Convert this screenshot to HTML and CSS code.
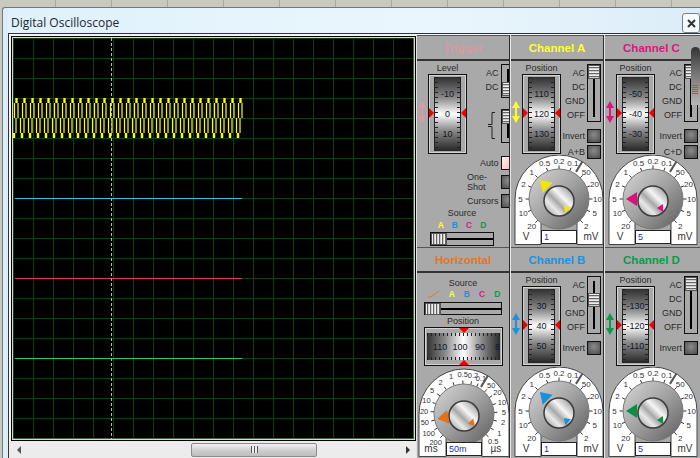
FILE: index.html
```html
<!DOCTYPE html>
<html lang="en">
<head>
  <meta charset="UTF-8" />
  <title>Digital Oscilloscope</title>
  <link rel="stylesheet" href="styles.css">
</head>
<body>
  <div class="window">
    <div class="titlebar">
      <span class="title">Digital Oscilloscope</span>
      <button class="close"><svg width="9" height="9" viewBox="0 0 9 9"><path d="M1 1l7 7M8 1L1 8" stroke="#333" stroke-width="2"/></svg></button>
    </div>

    <div class="client">
      <!-- Scope screen and its scrollbar -->
      <div class="scope-col">
        <div class="scope">
          <div class="screen"><svg id="traces" width="401" height="401" viewBox="0 0 401 401"></svg></div>
        </div>
        <div class="scrollbar">
          <span class="arrow-left"></span>
          <div class="track"><div class="thumb"><span class="grip"></span></div></div>
          <span class="arrow-right"></span>
        </div>
      </div>

      <!-- Control panels -->
      <div class="panels">
        <div class="panel">
          <h2 class="heading trigger">Trigger</h2>
          <div class="body">
            <div class="trigger-top">
              <svg class="updown" style="color:#dd9aa4" width="8" height="22" viewBox="0 0 8 22"><path d="M4 0l4 7H5v8h3l-4 7-4-7h3V7H0z" fill="currentColor"/></svg>
              <div class="drum-col">
                <div class="cap">Level</div>
                <div class="drum"><div class="face"><span>-10</span><span>0</span><span>10</span></div></div>
              </div>
              <div class="trigger-side">
                <div class="coupling">
                  <div class="labels two"><span>AC</span><span>DC</span></div>
                  <div class="vslider short"><i class="vthumb low"></i></div>
                </div>
                <div class="coupling edge-row">
                  <svg width="9" height="27" viewBox="0 0 9 27"><path d="M8 .5H5v12H1M1 14.5h4v12h3" fill="none" stroke="#222"/></svg>
                  <div class="vslider short"><i class="vthumb"></i></div>
                </div>
                <div class="btn-row first"><span>Auto</span><i class="btn on"></i></div>
                <div class="btn-row"><span>One-Shot</span><i class="btn"></i></div>
                <div class="btn-row"><span>Cursors</span><i class="btn"></i></div>
              </div>
            </div>
            <div class="source trigger-source">
              <div class="cap">Source</div>
              <div class="letters"><b class="c-a">A</b><b class="c-b">B</b><b class="c-c">C</b><b class="c-d">D</b></div>
              <div class="hslider narrow"><i class="hthumb"></i></div>
            </div>
          </div>
        </div>

        <div class="panel">
          <h2 class="heading c-a">Channel A</h2>
          <div class="body">
            <div class="chan-top">
              <svg class="updown" style="color:#ffff22" width="8" height="22" viewBox="0 0 8 22"><path d="M4 0l4 7H5v8h3l-4 7-4-7h3V7H0z" fill="currentColor"/></svg>
              <div class="drum-col">
                <div class="cap">Position</div>
                <div class="drum"><div class="face"><span>110</span><span>120</span><span>130</span></div></div>
              </div>
              <div class="chan-side">
                <div class="coupling">
                  <div class="labels"><span>AC</span><span>DC</span><span>GND</span><span>OFF</span></div>
                  <div class="vslider"><i class="vthumb"></i></div>
                </div>
                <div class="btn-row first"><span>Invert</span><i class="btn"></i></div>
                <div class="btn-row"><span>A+B</span><i class="btn"></i></div>
              </div>
            </div>
            <svg class="dial" data-color="#f5e600" data-angle="-45" data-value="1" data-kind="volts" width="94" height="90"></svg>
          </div>
        </div>

        <div class="panel last">
          <h2 class="heading c-c">Channel C</h2>
          <div class="body">
            <div class="chan-top">
              <svg class="updown" style="color:#e0147f" width="8" height="22" viewBox="0 0 8 22"><path d="M4 0l4 7H5v8h3l-4 7-4-7h3V7H0z" fill="currentColor"/></svg>
              <div class="drum-col">
                <div class="cap">Position</div>
                <div class="drum"><div class="face"><span>-50</span><span>-40</span><span>-30</span></div></div>
              </div>
              <div class="chan-side">
                <div class="coupling">
                  <div class="labels"><span>AC</span><span>DC</span><span>GND</span><span>OFF</span></div>
                  <div class="vslider"><i class="vthumb"></i></div>
                </div>
                <div class="btn-row first"><span>Invert</span><i class="btn"></i></div>
                <div class="btn-row"><span>C+D</span><i class="btn"></i></div>
              </div>
            </div>
            <svg class="dial" data-color="#d8117c" data-angle="-90" data-value="5" data-kind="volts" width="94" height="90"></svg>
            <div class="overlay-bar"></div>
          </div>
        </div>

        <div class="panel">
          <h2 class="heading horizontal">Horizontal</h2>
          <div class="body">
            <div class="source horiz-source">
              <div class="cap">Source</div>
              <div class="letters wide">
                <svg width="12" height="8" viewBox="0 0 12 8"><path d="M0 7h3l8-6" fill="none" stroke="#e07a25"/></svg>
                <b class="c-a">A</b><b class="c-b">B</b><b class="c-c">C</b><b class="c-d">D</b>
              </div>
              <div class="hslider"><i class="hthumb"></i></div>
            </div>
            <div class="cap">Position</div>
            <div class="hdrum"><div class="hface"><span>110</span><span>100</span><span>90</span><span>80</span></div></div>
            <svg class="dial" data-color="#e0721c" data-angle="-100" data-value="50m" data-kind="time" width="94" height="90"></svg>
          </div>
        </div>

        <div class="panel">
          <h2 class="heading c-b">Channel B</h2>
          <div class="body">
            <div class="chan-top">
              <svg class="updown" style="color:#1a92e0" width="8" height="22" viewBox="0 0 8 22"><path d="M4 0l4 7H5v8h3l-4 7-4-7h3V7H0z" fill="currentColor"/></svg>
              <div class="drum-col">
                <div class="cap">Position</div>
                <div class="drum"><div class="face"><span>30</span><span>40</span><span>50</span></div></div>
              </div>
              <div class="chan-side">
                <div class="coupling">
                  <div class="labels"><span>AC</span><span>DC</span><span>GND</span><span>OFF</span></div>
                  <div class="vslider"><i class="vthumb second"></i></div>
                </div>
                <div class="btn-row first"><span>Invert</span><i class="btn"></i></div>
              </div>
            </div>
            <svg class="dial" data-color="#1a8fdc" data-angle="-45" data-value="1" data-kind="volts" width="94" height="90"></svg>
          </div>
        </div>

        <div class="panel last">
          <h2 class="heading c-d">Channel D</h2>
          <div class="body">
            <div class="chan-top">
              <svg class="updown" style="color:#0a9a48" width="8" height="22" viewBox="0 0 8 22"><path d="M4 0l4 7H5v8h3l-4 7-4-7h3V7H0z" fill="currentColor"/></svg>
              <div class="drum-col">
                <div class="cap">Position</div>
                <div class="drum"><div class="face"><span>-130</span><span>-120</span><span>-110</span></div></div>
              </div>
              <div class="chan-side">
                <div class="coupling">
                  <div class="labels"><span>AC</span><span>DC</span><span>GND</span><span>OFF</span></div>
                  <div class="vslider"><i class="vthumb"></i></div>
                </div>
                <div class="btn-row first"><span>Invert</span><i class="btn"></i></div>
              </div>
            </div>
            <svg class="dial" data-color="#0a8f44" data-angle="-90" data-value="5" data-kind="volts" width="94" height="90"></svg>
          </div>
        </div>
      </div>
    </div>
  </div>

  <script src="script.js"></script>
</body>
</html>
```

FILE: styles.css
```css
/* Basic reset */
* {
  margin: 0;
  padding: 0;
  box-sizing: border-box;
}

body {
  width: 700px;
  height: 458px;
  overflow: hidden;
  padding: 7px 0 0 2px;
  background: repeating-linear-gradient(90deg, #c9c9bf 0 55px, #a9a9a0 55px 56px);
  font-family: "Liberation Sans", sans-serif;
  font-size: 9px;
  color: #2a2a2a;
}

/* Window frame */
.window {
  width: 698px;
  height: 451px;
  padding-left: 5px;
  background: #dcedf8;
  border-left: 1px solid #6d7a84;
  border-top: 1px solid #6d7a84;
  border-radius: 3px 0 0 0;
}

.titlebar {
  height: 25px;
  display: flex;
  align-items: center;
  justify-content: space-between;
  padding: 3px 0 0 3px;
  background: linear-gradient(90deg, #dff1fc, #eaf6fd 60%, #dcedf8);
}

.title {
  font-family: "Open Sans", sans-serif;
  font-size: 12px;
  color: #1c2733;
}

.close {
  width: 18px;
  height: 20px;
  margin-top: 2px;
  border: 1px solid #77818a;
  border-radius: 3px;
  background: #f6fafc;
  display: flex;
  align-items: center;
  justify-content: center;
}

.client {
  height: 425px;
  display: flex;
  background: #f4f4f4;
  border-top: 1px solid #333;
  border-left: 1px solid #333;
}

/* Scope */
.scope-col {
  width: 408px;
  padding: 2px 0 0 2px;
  display: flex;
  flex-direction: column;
}

.scope {
  width: 405px;
  height: 405px;
  padding: 1px 0 0 1px;
  border: 1px solid #000;
  background: #d8d8d8;
}

.screen {
  width: 401px;
  height: 401px;
  background-color: #000;
  background-image:
    linear-gradient(#0c430c 1px, transparent 1px),
    linear-gradient(90deg, #0c430c 1px, transparent 1px);
  background-size: 20px 20px;
  border-right: 1px solid #3e6a3e;
  border-bottom: 1px solid #3e6a3e;
}

.screen svg {
  display: block;
}

.scrollbar {
  flex: 1;
  display: flex;
  align-items: center;
  margin-left: -2px;
  padding: 0 4px;
  background: #ececec;
}

.track {
  flex: 1;
  padding-left: 170px;
}

.thumb {
  width: 126px;
  height: 14px;
  border: 1px solid #8b8b8b;
  border-radius: 2px;
  background: linear-gradient(#f2f2f2, #d0d0d0 50%, #bdbdbd);
  display: flex;
  align-items: center;
  justify-content: center;
}

.grip {
  width: 7px;
  height: 7px;
  background: repeating-linear-gradient(90deg, #555 0 1px, #eee 1px 3px);
}

.arrow-left, .arrow-right {
  width: 0;
  height: 0;
  border-top: 4px solid transparent;
  border-bottom: 4px solid transparent;
}
.arrow-left { border-right: 4px solid #555; margin-left: 4px; }
.arrow-right { border-left: 4px solid #333; margin-right: 2px; }

/* Panels grid */
.panels {
  display: grid;
  grid-template-columns: 94px 94px 96px;
  grid-template-rows: 212px 212px;
  margin-top: 1px;
}

.panel {
  display: flex;
  flex-direction: column;
  background: #a9a9a9;
  border-left: 1px solid #e4e4e4;
  border-right: 1px solid #2e2e2e;
  overflow: hidden;
}
.panel.last { border-right: 0; }

.heading {
  height: 26px;
  flex: none;
  font-size: 11.5px;
  line-height: 25px;
  text-align: center;
  border-top: 1px solid #555;
  border-bottom: 2px solid #333;
}
.panel.last .heading { padding-right: 2px; }

.trigger { color: #d799a3; }
.horizontal { color: #e5751d; }
.c-a { color: #ffff2e; }
.c-b { color: #1a92e0; }
.c-c { color: #e0147f; }
.c-d { color: #0a9a48; }

.body {
  flex: 1;
  position: relative;
}

.cap {
  height: 12px;
  line-height: 12px;
  text-align: center;
}

/* Top row of a channel: arrows, drum, coupling */
.chan-top {
  height: 94px;
  display: flex;
}

.updown {
  flex: none;
  margin: 40px 2px 0 1px;
}

.drum-col {
  width: 39px;
  flex: none;
  padding-top: 1px;
}

.drum {
  position: relative;
  width: 39px;
  height: 80px;
  padding: 2px 5px;
  border: 1px solid #111;
  outline: 1px solid #d4d4d4;
  outline-offset: -2px;
  background: #a9a9a9;
}
.drum::before, .drum::after {
  content: "";
  position: absolute;
  top: 33px;
  border-top: 5px solid transparent;
  border-bottom: 5px solid transparent;
}
.drum::before { left: 0; border-left: 5px solid #f00000; }
.drum::after { right: 0; border-right: 5px solid #f00000; }

.face {
  height: 100%;
  display: flex;
  flex-direction: column;
  align-items: center;
  justify-content: center;
  gap: 8px;
  font-size: 9px;
  color: #101828;
  background:
    repeating-linear-gradient(#222 0 1px, transparent 1px 5px) left / 3px 100% no-repeat,
    repeating-linear-gradient(#222 0 1px, transparent 1px 5px) right / 3px 100% no-repeat,
    linear-gradient(#303030, #8a8a8a 28%, #fff 50%, #8a8a8a 72%, #262626);
  border-left: 1px solid #222;
  border-right: 1px solid #222;
}
.face span {
  height: 12px;
  line-height: 12px;
}

.chan-side {
  flex: 1;
  padding-top: 3px;
}

.coupling {
  display: flex;
  justify-content: flex-end;
  gap: 2px;
  padding-right: 2px;
}

.labels {
  display: flex;
  flex-direction: column;
  align-items: flex-end;
  gap: 2px;
  padding-top: 3px;
}
.labels span {
  height: 12px;
  line-height: 12px;
}

.vslider {
  position: relative;
  width: 14px;
  height: 58px;
  border: 1px solid #111;
  background: linear-gradient(90deg, #a9a9a9 5px, #000 5px 7px, #a9a9a9 7px);
  background-size: 100% calc(100% - 8px);
  background-position: 0 4px;
  background-repeat: no-repeat;
}
.vslider.short { height: 34px; }

.vthumb {
  position: absolute;
  left: 0;
  top: 0;
  width: 12px;
  height: 14px;
  border: 1px solid #555;
  background: repeating-linear-gradient(#eee 0 1px, #666 1px 2px, #ccc 2px 3px);
}
.vthumb.low { top: 17px; }
.vthumb.second { top: 16px; }

.btn-row {
  display: flex;
  justify-content: flex-end;
  align-items: center;
  gap: 2px;
  padding-right: 2px;
  margin-top: 2px;
}
.btn-row.first { margin-top: 7px; }

.btn {
  width: 14px;
  height: 14px;
  flex: none;
  border: 1px solid #111;
  background: radial-gradient(circle at 50% 40%, #8a8a8a, #4c4c4c);
}
.btn.on {
  background: linear-gradient(135deg, #fff0f0, #f8b8bc);
}

/* Trigger panel */
.trigger-top {
  height: 146px;
  display: flex;
}

.trigger-side {
  flex: 1;
  padding-top: 3px;
}
.trigger-side .labels { padding-top: 3px; }
.trigger-side .coupling + .coupling { margin-top: 11px; }
.edge-row svg { margin-top: 3px; margin-right: 3px; }
.trigger-side .btn-row.first { margin-top: 13px; }

.source {
  display: flex;
  flex-direction: column;
  align-items: center;
}
.trigger-source { padding-right: 2px; margin-top: 0; }
.horiz-source { padding-top: 4px; padding-right: 0; height: 42px; }

.letters {
  display: flex;
  align-items: center;
  gap: 8px;
  height: 11px;
  font-size: 8.5px;
}
.letters.wide { gap: 9px; margin-right: -2px; }

.hslider {
  position: relative;
  width: 78px;
  height: 14px;
  margin-top: 2px;
  border: 1px solid #111;
  background: linear-gradient(#a9a9a9 5px, #000 5px 7px, #a9a9a9 7px);
}
.hslider.narrow { width: 64px; }

.hthumb {
  position: absolute;
  left: 0;
  top: 0;
  width: 16px;
  height: 12px;
  border: 1px solid #555;
  background: repeating-linear-gradient(90deg, #eee 0 1px, #666 1px 2px, #ccc 2px 3px);
}

/* Horizontal position drum */
.hdrum {
  position: relative;
  width: 79px;
  height: 39px;
  margin: 0 0 1px 7px;
  padding: 5px 2px;
  border: 1px solid #111;
  outline: 1px solid #d4d4d4;
  outline-offset: -2px;
  background: #a9a9a9;
}
.hdrum::before, .hdrum::after {
  content: "";
  position: absolute;
  left: 34px;
  border-left: 5px solid transparent;
  border-right: 5px solid transparent;
}
.hdrum::before { top: 0; border-top: 5px solid #f00000; }
.hdrum::after { bottom: 0; border-bottom: 5px solid #f00000; }

.hface {
  height: 100%;
  display: flex;
  align-items: center;
  padding-left: 3px;
  overflow: hidden;
  color: #101828;
  background:
    repeating-linear-gradient(90deg, #222 0 1px, transparent 1px 4px) top / 100% 3px no-repeat,
    repeating-linear-gradient(90deg, #222 0 1px, transparent 1px 4px) bottom / 100% 3px no-repeat,
    linear-gradient(90deg, #333, #8a8a8a 25%, #fff 50%, #8a8a8a 75%, #2a2a2a);
}
.hface span {
  width: 20px;
  flex: none;
  text-align: center;
}

.dial {
  display: block;
}

/* Dark bar lying over the Channel C panel */
.overlay-bar {
  position: absolute;
  left: 86px;
  top: -14px;
  width: 9px;
  height: 58px;
  border-radius: 5px 5px 0 0;
  background:
    repeating-linear-gradient(#19a050 0 1px, transparent 1px 2px) 1px 38px / 6px 10px no-repeat,
    linear-gradient(#333, #6e6e6e 40%, #b8b8b8);
}
```

FILE: script.js
```js
/* =====================
   SCOPE TRACES
   ===================== */
const SVG_NS = "http://www.w3.org/2000/svg";
const traces = document.getElementById("traces");

function addEl(parent, tag, attrs, text) {
  const el = document.createElementNS(SVG_NS, tag);
  for (const k in attrs) el.setAttribute(k, attrs[k]);
  if (text !== undefined) el.textContent = text;
  parent.appendChild(el);
  return el;
}

// coordinates are relative to the screen's top-left corner
let d = "";
let bars = "";
for (let k = 0; k < 29; k++) {
  const x = 3.5 + k * 8;
  bars += `M${x} 60v5`;
  d += `M${x - 2} 65v15M${x + 1.5} 65v15`;
}
for (let k = 0; k < 29; k++) {
  const x = 1 + k * 8;
  bars += `M${x} 95v5`;
  d += `M${x - 1.5} 80v15M${x + 2} 80v15`;
}
addEl(traces, "path", { d: d, stroke: "#ffff00", "stroke-width": 1.2, fill: "none" });
addEl(traces, "path", { d: bars, stroke: "#ffff00", "stroke-width": 2.4, fill: "none" });
addEl(traces, "line", { x1: 2, x2: 229, y1: 160.5, y2: 160.5, stroke: "#22c8d8" });
addEl(traces, "line", { x1: 2, x2: 229, y1: 240.5, y2: 240.5, stroke: "#e8365a" });
addEl(traces, "line", { x1: 2, x2: 229, y1: 320.5, y2: 320.5, stroke: "#1fd060" });
addEl(traces, "line", { x1: 98.5, x2: 98.5, y1: 0, y2: 401, stroke: "#b8b8b8", "stroke-dasharray": "3 2" });

/* =====================
   DIALS
   ===================== */
const scales = {
  volts: {
    cx: 48, cy: 44, r: 44, size: 8, textR: 38.5, left: "V", right: "mV",
    labels: [
      ["20", -135], ["10", -112], ["5", -90], ["2", -67], ["1", -45], ["0.5", -22], ["0.2", 0], ["0.1", 21],
      ["50", 45], ["20", 67], ["10", 90], ["5", 112], ["2", 135]
    ]
  },
  time: {
    cx: 47, cy: 47, r: 45, size: 7.5, textR: 40, left: "ms", right: "µs",
    labels: [
      ["200", -135], ["100", -118], ["50", -102], ["20", -86], ["10", -70], ["5", -53], ["2", -36], ["1", -19],
      ["0.5", -2], ["0.2", 13], ["0.1", 25], ["50", 43], ["20", 57], ["10", 72], ["5", 87], ["2", 102], ["1", 118], ["0.5", 133]
    ]
  }
};

function polar(s, angle, r) {
  const a = angle * Math.PI / 180;
  return [s.cx + Math.sin(a) * r, s.cy - Math.cos(a) * r];
}

function drawDial(svg, index) {
  const s = scales[svg.dataset.kind];
  const color = svg.dataset.color;
  const { cx, cy, r } = s;
  const defs = addEl(svg, "defs", {});
  const outer = addEl(defs, "linearGradient", { id: "outer" + index, x1: 0, y1: 0, x2: 1, y2: 1 });
  addEl(outer, "stop", { offset: 0, "stop-color": "#d8d8d8" });
  addEl(outer, "stop", { offset: 0.5, "stop-color": "#a0a0a0" });
  addEl(outer, "stop", { offset: 1, "stop-color": "#5c5c5c" });
  const inner = addEl(defs, "linearGradient", { id: "inner" + index, x1: 0, y1: 1, x2: 1, y2: 0 });
  [[0, "#8c8c8c"], [0.3, "#e8e8e8"], [0.45, "#a8a8a8"], [0.62, "#f6f6f6"], [1, "#777"]].forEach((st) => {
    addEl(inner, "stop", { offset: st[0], "stop-color": st[1] });
  });

  // white scale: an arch with two legs
  const legL = cx - 18, legR = cx + 18;
  addEl(svg, "path", {
    d: `M${cx - r} 89.5V${cy}A${r} ${r} 0 0 1 ${cx + r} ${cy}V89.5H${legR}V60H${legL}V89.5Z`,
    fill: "#fff", stroke: "#444"
  });

  s.labels.forEach((l) => {
    const p = polar(s, l[1], s.textR);
    addEl(svg, "text", { x: p[0], y: p[1] + 3, "text-anchor": "middle", "font-size": s.size, fill: "#333" }, l[0]);
    const a = polar(s, l[1], 30), b = polar(s, l[1], 33.5);
    addEl(svg, "line", { x1: a[0], y1: a[1], x2: b[0], y2: b[1], stroke: "#333" });
  });

  // slash between the two scales
  const g1 = polar(s, 32, 32), g2 = polar(s, 32, r);
  addEl(svg, "line", { x1: g1[0], y1: g1[1], x2: g2[0], y2: g2[1], stroke: "#555", "stroke-width": 2 });

  addEl(svg, "text", { x: cx - 33, y: 85, "text-anchor": "middle", "font-size": 10, fill: "#333" }, s.left);
  addEl(svg, "text", { x: cx + 32, y: 85, "text-anchor": "middle", "font-size": 10, fill: "#333" }, s.right);

  // knob
  addEl(svg, "circle", { cx: cx, cy: cy, r: 30, fill: `url(#outer${index})`, stroke: "#777" });
  addEl(svg, "circle", { cx: cx, cy: cy + 2, r: 15, fill: `url(#inner${index})`, stroke: "#3c3c3c", "stroke-width": 1.5 });

  // pointers
  const angle = +svg.dataset.angle;
  addEl(svg, "path", { d: "M0 -27L7 -16H-7Z", fill: color, transform: `translate(${cx} ${cy}) rotate(${angle})` });
  addEl(svg, "path", { d: "M0 -3L4 3H-4Z", fill: color, transform: `translate(${cx + 7} ${cy + 9}) rotate(${angle})` });

  // value box
  addEl(svg, "rect", { x: cx - 17.5, y: 75.5, width: 35, height: 13, fill: "#fff", stroke: "#222" });
  addEl(svg, "text", { x: cx - 15, y: 85, "font-size": 9, fill: "#1c2fc8" }, svg.dataset.value);
}

document.querySelectorAll(".dial").forEach(drawDial);
```
